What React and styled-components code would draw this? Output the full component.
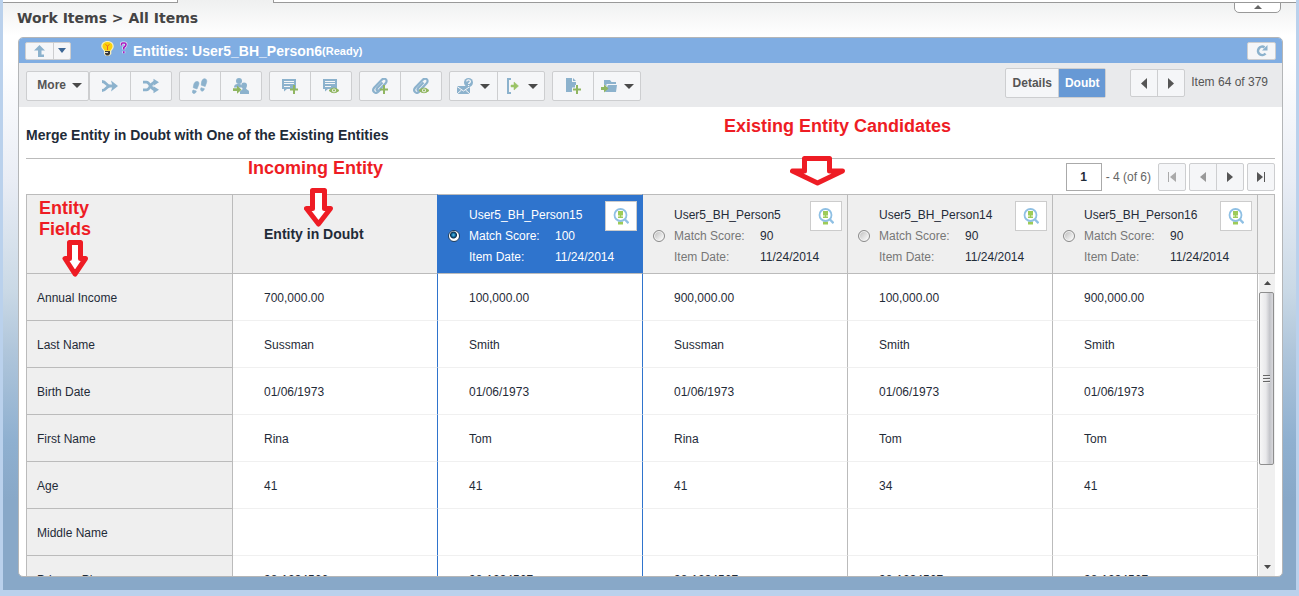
import React from "react";
import styled, { createGlobalStyle } from "styled-components";

const BLUE = "#8cb2cd";
const GREEN = "#90b661";
const RED = "#ee1c24";

const GlobalStyle = createGlobalStyle`
  *, *::before, *::after { box-sizing: border-box; }
  body {
    margin: 0;
    font-family: "Liberation Sans", Arial, sans-serif;
    font-size: 12px;
    color: #1f2b38;
  }
  button, input { font: inherit; color: inherit; margin: 0; }
  svg { display: block; flex: none; }
`;

const Frame = styled.div`
  position: relative;
  display: flex;
  flex-direction: column;
  height: 100vh;
  border: solid #bad1ec;
  border-width: 0 3px 6px;
  background:
    linear-gradient(#eff0f0, rgba(255, 255, 255, 0) 36px),
    linear-gradient(#fff 0, #fff 60px, #e9edf5 180px, #cad9e6 290px, #b0c6db 350px, #8fb0d0 440px, #88a8c8 500px);
`;

const TabStrip = styled.div`
  display: flex;
  flex: none;
  height: 3px;
`;

const TabEdge = styled.div`
  flex: ${(p) => (p.$fill ? "1" : "0 0 175px")};
  background: #fff;
  border: 0 solid #999;
  border-bottom-width: 1px;
  border-right-width: ${(p) => (p.$fill ? 0 : 1)}px;
  border-left-width: ${(p) => (p.$fill ? 1 : 0)}px;
`;

const ActiveTab = styled.div`
  flex: 0 0 95px;
`;

const CollapseButton = styled.button`
  position: absolute;
  top: 2px;
  right: 15px;
  display: flex;
  align-items: center;
  justify-content: center;
  width: 47px;
  height: 11px;
  padding: 0 0 2px;
  background: #fff;
  border: 1px solid #999;
  border-radius: 0 0 5px 5px;
`;

const Breadcrumb = styled.h1`
  flex: none;
  margin: 0;
  padding: 0 14px 4px;
  font: bold 14px/30px "DejaVu Sans", Verdana, sans-serif;
  color: #444;
`;

const Panel = styled.main`
  position: relative;
  display: flex;
  flex: 1;
  flex-direction: column;
  min-height: 0;
  margin: 0 13px 13px 15px;
  background: #fff;
  border: 1px solid #b4b6b8;
  border-radius: 5px;
`;

const TitleBar = styled.header`
  display: flex;
  flex: none;
  align-items: center;
  height: 25px;
  padding: 0 6px;
  background: #80ade2;
  border-radius: 4px 4px 0 0;
  color: #fff;
`;

const TitleIcons = styled.div`
  display: flex;
  gap: 6px;
  margin: 0 5px 4px 30px;
`;

const PanelTitle = styled.h2`
  flex: 1;
  margin: 0;
  font-size: 14px;
  line-height: 20px;
`;

const Status = styled.small`
  font-size: 11px;
  vertical-align: 1px;
`;

const Toolbar = styled.div`
  display: flex;
  flex: none;
  justify-content: space-between;
  height: 44px;
  padding: 0 7px;
  background: #e9eaec;
`;

const ToolSet = styled.div`
  display: flex;
  align-items: flex-start;
  gap: 7px;
  padding-top: 8px;
`;

const ViewSet = styled.div`
  display: flex;
  align-items: center;
  align-self: flex-start;
  padding: 5px 7px 0 0;
  color: #555;
`;

const Group = styled.div`
  display: flex;
  border: 1px solid #cdced0;
  border-radius: 2px;
  background: #f5f6f8;
  margin-left: ${(p) => p.$offset || 0}px;
`;

const ToolButton = styled.button`
  display: flex;
  align-items: center;
  justify-content: center;
  gap: ${(p) => p.$gap || 7}px;
  width: ${(p) => p.$width || 40}px;
  height: ${(p) => p.$height || 28}px;
  padding: 0;
  border: 0;
  background: ${(p) => (p.$active ? "#6799d5" : "transparent")};
  color: ${(p) => (p.$active ? "#fff" : "#555")};
  font-weight: bold;

  & + & { border-left: 1px solid ${(p) => (p.$active ? "#6799d5" : "#cdced0")}; }
`;

const MenuButton = styled(ToolButton)`
  justify-content: flex-end;
  padding: 0 6px 2px 0;
`;

const Joined = styled.div`
  display: flex;
`;

const Position = styled.span`
  margin-left: 6px;
  padding-bottom: 2px;
  line-height: 16px;
`;

const Heading = styled.h3`
  flex: none;
  height: 52px;
  margin: 0 7px;
  padding-top: 3px;
  border-bottom: 1px solid #bbb;
  font-size: 14px;
  line-height: 50px;
`;

const Pager = styled.div`
  display: flex;
  flex: none;
  align-items: center;
  justify-content: flex-end;
  gap: 3px;
  margin: 0 7px;
  padding: 4px 0 3px;
  color: #666;
`;

const PageInput = styled.input`
  width: 36px;
  height: 28px;
  padding: 0;
  border: 1px solid #aaa;
  background: #fff;
  color: #1f2b38;
  font-weight: bold;
  text-align: center;
`;

const PageLabel = styled.label`
  margin: 0 4px 0 1px;
`;

const Grid = styled.div`
  display: flex;
  flex: 1;
  min-height: 0;
  margin: 0 7px;
  overflow: hidden;
`;

const TableArea = styled.div`
  flex: 1;
  overflow: hidden;
`;

const Table = styled.table`
  width: 100%;
  table-layout: fixed;
  border-collapse: separate;
  border-spacing: 0;
`;

const FieldCol = styled.col`
  width: 207px;
`;

const HeadCell = styled.th`
  height: 80px;
  padding: 0 0 0 ${(p) => p.$indent || 0}px;
  border: solid #bbb;
  border-width: 1px 1px 1px ${(p) => (p.$first ? 1 : 0)}px;
  border-right-color: ${(p) => (p.$edge ? "#2f74cd" : "#bbb")};
  background: ${(p) => (p.$selected ? "#2f74cd" : "#efefef")};
  color: ${(p) => (p.$selected ? "#fff" : "#1f2b38")};
  font-size: 14px;
  text-align: left;
`;

const FieldName = styled.th`
  height: 47px;
  padding: 2px 10px 0;
  border: solid #bbb;
  border-width: 0 1px 1px;
  background: #efefef;
  font-weight: normal;
  text-align: left;
`;

const Value = styled.td`
  height: 47px;
  padding: 2px 0 0 31px;
  border: solid #f0f0f0;
  border-width: 0 1px 1px 0;
  border-right-color: ${(p) => (p.$edge ? "#2f74cd" : "#bbb")};
`;

const Candidate = styled.div`
  display: grid;
  grid-template-columns: 31px 86px 1fr;
  grid-template-rows: repeat(3, 21px);
  align-items: center;
  height: 78px;
  padding: 9px 5px 0 0;
  font-size: 12px;
  font-weight: normal;
`;

const CandidateName = styled.label`
  grid-area: 1 / 2 / 2 / 4;
`;

const Term = styled.span`
  grid-area: ${(p) => p.$row} / 2;
  color: ${(p) => (p.$selected ? "#fff" : "#777")};
`;

const Detail = styled.span`
  grid-area: ${(p) => p.$row} / 3;
`;

const Radio = styled.input`
  grid-area: 2 / 1;
  appearance: none;
  width: 12px;
  height: 12px;
  margin-left: 10px;
  border: 1px solid #8a8a8a;
  border-radius: 50%;
  background: linear-gradient(135deg, #bbb, #f4f4f4 80%);
  box-shadow: inset 0 0 0 1px #f4f4f4;

  &:checked {
    border-color: #24415e;
    background: radial-gradient(circle at 45% 40%, #5cc3ec 0, #0e6396 2px, #0b2b45 3px, #fff 4px);
    box-shadow: none;
  }
`;

const LookupButton = styled.button`
  grid-area: 1 / 3 / 3 / 4;
  display: flex;
  align-items: center;
  justify-content: center;
  align-self: start;
  justify-self: end;
  width: 32px;
  height: 30px;
  margin-top: -3px;
  padding: 0;
  border: 1px solid #ccc;
  background: #fff;
`;

const ScrollSide = styled.div`
  display: flex;
  flex: 0 0 17px;
  flex-direction: column;
`;

const Corner = styled.div`
  flex: 0 0 80px;
  border: solid #bbb;
  border-width: 1px 1px 1px 0;
  background: #efefef;
`;

const Track = styled.div`
  display: flex;
  flex: 1;
  flex-direction: column;
  align-items: center;
  margin-left: 1px;
  background: #f0f0f0;
`;

const TrackArrow = styled.div`
  display: flex;
  flex: 0 0 18px;
  align-items: center;
`;

const Thumb = styled.div`
  display: flex;
  flex: 0 1 173px;
  flex-direction: column;
  align-items: center;
  justify-content: center;
  gap: 1px;
  align-self: flex-start;
  width: 15px;
  margin-bottom: auto;
  border: 1px solid #8e8e8e;
  border-radius: 2px;
  background: linear-gradient(90deg, #f7f7f7, #e9e9eb 45%, #c4c5ca 75%, #d8d8dc);
`;

const Grip = styled.div`
  width: 7px;
  height: 2px;
  background: #666;
  border-bottom: 1px solid #eee;
`;

const Note = styled.div`
  position: absolute;
  top: ${(p) => p.$y}px;
  left: ${(p) => p.$x}px;
  color: ${RED};
  font-size: 18px;
  font-weight: bold;
  line-height: 21px;
  white-space: pre;
  pointer-events: none;
`;

const NoteArrow = styled.svg`
  position: absolute;
  top: ${(p) => p.$y}px;
  left: ${(p) => p.$x}px;
  fill: #fff;
  stroke: ${RED};
  stroke-width: 5;
  stroke-linejoin: round;
  pointer-events: none;
`;

const Triangle = ({ dir = "down", w = 10, h = 5, color = "#4a4a4a", bar }) => {
  const points = {
    down: `0,0 ${w},0 ${w / 2},${h}`,
    up: `0,${h} ${w},${h} ${w / 2},0`,
    left: `${w},0 ${w},${h} 0,${h / 2}`,
    right: `0,0 0,${h} ${w},${h / 2}`,
  }[dir];
  return (
    <svg width={w + (bar ? 2 : 0)} height={h} viewBox={`${bar && dir === "left" ? -2 : 0} 0 ${w + (bar ? 2 : 0)} ${h}`}>
      <polygon points={points} fill={color} />
      {bar && <rect x={dir === "left" ? -2 : w + 1} width="1" height={h} fill={color} />}
    </svg>
  );
};

const Icon = ({ children, size = 16 }) => (
  <svg width={size} height={size} viewBox="0 0 16 16" fill={BLUE} aria-hidden="true">
    {children}
  </svg>
);

const Plus = () => <path d="M11 7h2v3.500h3v2h-3V16h-2v-3.500H8v-2h3z" fill={GREEN} />;
const Eye = () => (
  <g>
    <path d="M6 12.500Q11 7.500 16 12.500Q11 17 6 12.500z" fill={GREEN} stroke={GREEN} />
    <circle cx="11" cy="12.400" r="1.900" fill="#f5f6f8" />
    <circle cx="11" cy="12.400" r="1.100" fill={GREEN} />
  </g>
);
const CommentLines = () => (
  <g>
    <path d="M0 1h14v10H5l-3 2.500V11H0z" />
    <path d="M2 3.500h10M2 5.500h10M2 8.500h6" stroke="#f5f6f8" strokeWidth="1" />
  </g>
);
const Clip = () => (
  <path
    d="M10.500 4.500 5 10.300c-1.300 1.600.8 3.300 2.100 1.900l6.500-7C16.500 2 12.400-1 9.800 1.700L2.300 9.500c-3 3.600 1 7 4 4.300l2.500-2.500"
    fill="none" stroke={BLUE} strokeWidth="2.200"
  />
);
const MergeIcon = () => (
  <Icon>
    <path d="M0 3.500c4.500 0 4 4.500 8 4.500h5M0 12.500C4.500 12.500 4 8 8 8" fill="none" stroke={BLUE} strokeWidth="2.800" />
    <path d="M9 2.500l7 5.500-7 5.500 1.500-5.500z" />
  </Icon>
);
const ShuffleIcon = () => (
  <Icon>
    <path d="M0 4.200h3.500c3.500 0 4.500 7.600 8.500 7.600M0 11.800h3.500C7 11.800 8 4.200 12 4.200" fill="none" stroke={BLUE} strokeWidth="2.800" />
    <path d="M10.500.7l5.500 3.500-5.500 3.600zM10.500 8.200l5.500 3.600-5.500 3.500z" />
  </Icon>
);
const StepsIcon = () => (
  <Icon>
    <path
      d="M4.500 3.500C7 3 7.500 5 6.500 7.300L5 11 1.300 9.700C1.500 7 2 4 4.500 3.500zM1 12l3.300 1C4 14.500 3 16 1.500 15.500 0 15 .3 13 1 12zM12.200.7c2.500-.2 3 2.300 2.300 4L13.200 8.500 9.300 7.200C9.300 4 10 1 12.200.7zM9 9.700l3.400 1c-.4 1.700-1.400 2.800-2.700 2.400C8.300 12.600 8.500 10.900 9 9.700z"
      stroke={BLUE} strokeWidth=".6"
    />
  </Icon>
);
const UsersIcon = () => (
  <Icon>
    <circle cx="6" cy="3" r="3" />
    <path d="M1 9.500C1 7 2.500 6 4.500 6h2C8 6 9 7 9 8v1.500z" />
    <path d="M11 4.500c3.600 0 3.600 3.500 2 6 .5 1.300 3 1.500 3 3V16H7v-2.500c1-1.500 2.800-1.500 2.500-3C7.800 7.500 8 4.500 11 4.500z" />
    <path d="M0 10.300h4V7.500l4.500 4.200-4.500 4V13H0z" fill={GREEN} />
  </Icon>
);
const MailQuestionIcon = () => (
  <Icon>
    <path d="M0 8h13v8H0z" />
    <path d="M0 16l4.500-4M13 16l-4.500-4M0 8.500l6.500 4.500L13 8.500" stroke="#f5f6f8" fill="none" />
    <circle cx="11.500" cy="4.500" r="4.500" />
    <path d="M9.800 3.600c0-2.400 3.600-2.200 3.600 0 0 1.300-1.800 1.200-1.800 2.500M11.600 6.900v1.200" stroke="#f5f6f8" strokeWidth="1.300" fill="none" />
  </Icon>
);
const ExitIcon = () => (
  <Icon>
    <path d="M6 0H2v16h4v-2H4V2h2z" />
    <path d="M6 7h3V4l4.500 4L9 12V9H6z" fill="#9bc366" stroke="#9bc366" strokeWidth=".5" />
  </Icon>
);
const FileIcon = () => (
  <Icon>
    <path d="M1 0h6v4h4v3h-1v2.500H7V14H1zM8 0l3 3H8z" />
    <Plus />
  </Icon>
);
const FolderIcon = () => (
  <Icon>
    <path d="M3 2h6l1.500 2H15v2H5.500v2.500L3 6.500zM7 7h9l-1 7H4z" />
    <path d="M0 9h3V6.500l4.500 4L3 14.500V12H0z" fill={GREEN} />
  </Icon>
);
const LookupIcon = () => (
  <svg width="16" height="17" viewBox="0 0 16 17" aria-hidden="true">
    <path d="M5 3h5v4.500H8.200v1H10V10H5V8.500h1.800v-1H5zM5 13.500h5v3H5z" fill="#9dcb58" />
    <circle cx="7.500" cy="7" r="6" fill="none" stroke="#8fc0e4" strokeWidth="1.800" />
    <path d="M11.500 11l4 4.200" stroke="#8fc0e4" strokeWidth="2.400" />
  </svg>
);
const BulbIcon = () => (
  <svg width="13" height="15" viewBox="0 0 13 15" aria-hidden="true">
    <path d="M6.500 0c3.700 0 6.300 2.300 6.300 5.300 0 2.200-1.500 3.300-2.500 4.700v3L8 15H5l-2-2v-3C2 8.500.2 7.500.2 5.300.2 2.300 2.800 0 6.500 0z" fill="#f7efc0" />
    <path d="M6.500 1C9.500 1 11.500 3 11.500 5.200c0 2-1.500 2.900-2.200 4.500H4C3.300 8.100 1.500 7.200 1.500 5.200 1.500 3 3.500 1 6.500 1z" fill="#fbd20c" />
    <path d="M4.500 3.500 6.500 5l2-1.500M6.500 5v4" stroke="#ee6a1f" fill="none" />
    <path d="M4 10h5v3l-1.500 1.500h-2L4 13z" fill="#3b3b3b" />
    <path d="M4 11.500h3" stroke="#ddd" />
  </svg>
);
const QuestionIcon = () => (
  <svg width="8" height="14" viewBox="0 0 8 14" aria-hidden="true" fill="none">
    <path d="M1.500 4.500V3Q1.500 2 2.500 2h2Q6 2 6 3.500T3.800 6.500V8.500M3.800 10.200v2" stroke="#fff" strokeWidth="3" strokeOpacity=".75" />
    <path d="M1.500 4.500V3Q1.500 2 2.500 2h2Q6 2 6 3.500T3.800 6.500V8.500M3.800 10.200v2" stroke="#a91cbe" strokeWidth="1.600" />
  </svg>
);
const UpIcon = () => (
  <svg width="12" height="12" viewBox="0 0 12 12" aria-hidden="true">
    <path d="M5.500 0 11 5.500H7.500V9.500H10V12H4V5.500H0z" fill={BLUE} />
  </svg>
);
const RefreshIcon = () => (
  <svg width="12" height="12" viewBox="0 0 12 12" aria-hidden="true">
    <path d="M9.500 8.500A4.200 4.200 0 1 1 8.500 2.300" fill="none" stroke={BLUE} strokeWidth="2.600" />
    <path d="M11.500 0v5.500H6z" fill={BLUE} />
  </svg>
);

const candidates = [
  { name: "User5_BH_Person15", score: 100, date: "11/24/2014" },
  { name: "User5_BH_Person5", score: 90, date: "11/24/2014" },
  { name: "User5_BH_Person14", score: 90, date: "11/24/2014" },
  { name: "User5_BH_Person16", score: 90, date: "11/24/2014" },
];

const rows = [
  ["Annual Income", "700,000.00", "100,000.00", "900,000.00", "100,000.00", "900,000.00"],
  ["Last Name", "Sussman", "Smith", "Sussman", "Smith", "Smith"],
  ["Birth Date", "01/06/1973", "01/06/1973", "01/06/1973", "01/06/1973", "01/06/1973"],
  ["First Name", "Rina", "Tom", "Rina", "Tom", "Tom"],
  ["Age", "41", "41", "41", "34", "41"],
  ["Middle Name", "", "", "", "", ""],
  ["Primary Phone", "98-1234566", "98-1234567", "98-1234567", "98-1234567", "98-1234567"],
];

export default function App() {
  const [selected, setSelected] = React.useState(0);
  return (
    <Frame>
      <GlobalStyle />
      <TabStrip>
        <TabEdge />
        <ActiveTab />
        <TabEdge $fill />
      </TabStrip>
      <CollapseButton aria-label="Collapse header">
        <Triangle dir="up" w={8} h={4} color="#666" />
      </CollapseButton>
      <Breadcrumb>Work Items &gt; All Items</Breadcrumb>

      <Panel>
        <TitleBar>
          <Group>
            <ToolButton $width={27} $height={16} aria-label="Up"><UpIcon /></ToolButton>
            <ToolButton $width={17} $height={16} aria-label="Open list">
              <Triangle w={8} color="#3d6796" />
            </ToolButton>
          </Group>
          <TitleIcons><BulbIcon /><QuestionIcon /></TitleIcons>
          <PanelTitle>Entities: User5_BH_Person6<Status>(Ready)</Status></PanelTitle>
          <Group>
            <ToolButton $width={27} $height={16} aria-label="Refresh"><RefreshIcon /></ToolButton>
          </Group>
        </TitleBar>

        <Toolbar>
          <ToolSet>
            <Joined>
              <Group>
                <MenuButton $width={61} $gap={6}>More <Triangle /></MenuButton>
              </Group>
              <Group>
                <ToolButton aria-label="Merge"><MergeIcon /></ToolButton>
                <ToolButton $width={41} aria-label="Reassign"><ShuffleIcon /></ToolButton>
              </Group>
            </Joined>
            <Group>
              <ToolButton aria-label="Track"><StepsIcon /></ToolButton>
              <ToolButton $width={41} aria-label="Assign users"><UsersIcon /></ToolButton>
            </Group>
            <Group>
              <ToolButton aria-label="Add comment"><Icon><CommentLines /><Plus /></Icon></ToolButton>
              <ToolButton $width={41} aria-label="View comments"><Icon><CommentLines /><Eye /></Icon></ToolButton>
            </Group>
            <Group>
              <ToolButton aria-label="Add attachment"><Icon><Clip /><Plus /></Icon></ToolButton>
              <ToolButton $width={41} aria-label="View attachments"><Icon><Clip /><Eye /></Icon></ToolButton>
            </Group>
            <Group>
              <ToolButton $width={47} aria-label="Send query"><MailQuestionIcon /><Triangle /></ToolButton>
              <ToolButton $width={47} aria-label="Export"><ExitIcon /><Triangle /></ToolButton>
            </Group>
            <Group>
              <ToolButton aria-label="New file"><FileIcon /></ToolButton>
              <ToolButton $width={47} aria-label="Move to folder"><FolderIcon /><Triangle /></ToolButton>
            </Group>
          </ToolSet>
          <ViewSet>
            <Group>
              <ToolButton $width={52}>Details</ToolButton>
              <ToolButton $width={47} $active>Doubt</ToolButton>
            </Group>
            <Group $offset={24}>
              <ToolButton $width={26} $height={26} aria-label="Previous item"><Triangle dir="left" w={6} h={11} color="#555" /></ToolButton>
              <ToolButton $width={27} $height={26} aria-label="Next item"><Triangle dir="right" w={6} h={11} color="#555" /></ToolButton>
            </Group>
            <Position>Item 64 of 379</Position>
          </ViewSet>
        </Toolbar>

        <Heading>Merge Entity in Doubt with One of the Existing Entities</Heading>

        <Pager>
          <PageInput id="page" defaultValue="1" />
          <PageLabel htmlFor="page">- 4 (of 6)</PageLabel>
          <Group>
            <ToolButton $width={26} $height={26} aria-label="First page"><Triangle dir="left" w={6} h={10} color="#aaa" bar /></ToolButton>
          </Group>
          <Group>
            <ToolButton $width={26} $height={26} aria-label="Previous page"><Triangle dir="left" w={6} h={10} color="#999" /></ToolButton>
            <ToolButton $width={27} $height={26} aria-label="Next page"><Triangle dir="right" w={6} h={10} color="#555" /></ToolButton>
          </Group>
          <Group>
            <ToolButton $width={26} $height={26} aria-label="Last page"><Triangle dir="right" w={6} h={10} color="#555" bar /></ToolButton>
          </Group>
        </Pager>

        <Grid>
          <TableArea>
            <Table>
              <colgroup>
                <FieldCol />
                <col /><col /><col /><col /><col />
              </colgroup>
              <thead>
                <tr>
                  <HeadCell $first aria-label="Field" />
                  <HeadCell $indent={31} $edge={selected === 0}>Entity in Doubt</HeadCell>
                  {candidates.map((c, i) => (
                    <HeadCell key={c.name} $selected={i === selected} $edge={i === selected || i + 1 === selected}>
                      <Candidate>
                        <CandidateName htmlFor={c.name}>{c.name}</CandidateName>
                        <Radio
                          type="radio"
                          name="candidate"
                          id={c.name}
                          checked={i === selected}
                          onChange={() => setSelected(i)}
                        />
                        <Term $row={2} $selected={i === selected}>Match Score:</Term>
                        <Detail $row={2}>{c.score}</Detail>
                        <Term $row={3} $selected={i === selected}>Item Date:</Term>
                        <Detail $row={3}>{c.date}</Detail>
                        <LookupButton aria-label={`Look up ${c.name}`}><LookupIcon /></LookupButton>
                      </Candidate>
                    </HeadCell>
                  ))}
                </tr>
              </thead>
              <tbody>
                {rows.map(([field, ...values]) => (
                  <tr key={field}>
                    <FieldName scope="row">{field}</FieldName>
                    {values.map((v, i) => (
                      <Value key={i} $edge={i === selected || i === selected + 1}>{v}</Value>
                    ))}
                  </tr>
                ))}
              </tbody>
            </Table>
          </TableArea>
          <ScrollSide>
            <Corner />
            <Track>
              <TrackArrow><Triangle dir="up" w={7} h={4} /></TrackArrow>
              <Thumb><Grip /><Grip /><Grip /></Thumb>
              <TrackArrow><Triangle w={7} h={4} /></TrackArrow>
            </Track>
          </ScrollSide>
        </Grid>

        <Note $x={20} $y={160}>{"Entity\nFields"}</Note>
        <NoteArrow $x={43} $y={202} width="27" height="38" viewBox="0 0 27 38">
          <path d="M7.500 2.500h11v16h5L13 34 3 18.500h4.500z" />
        </NoteArrow>
        <Note $x={229} $y={120}>Incoming Entity</Note>
        <NoteArrow $x={285} $y={150} width="30" height="40" viewBox="0 0 30 40">
          <path d="M8.500 2.500h12v18h6L14.500 36 2.500 20.500h6z" />
        </NoteArrow>
        <Note $x={705} $y={78}>Existing Entity Candidates</Note>
        <NoteArrow $x={771} $y={118} width="56" height="31" viewBox="0 0 56 31">
          <path d="M14.500 2.500h25v12.500h13L27.500 27 2.500 15h12z" />
        </NoteArrow>
      </Panel>
    </Frame>
  );
}
